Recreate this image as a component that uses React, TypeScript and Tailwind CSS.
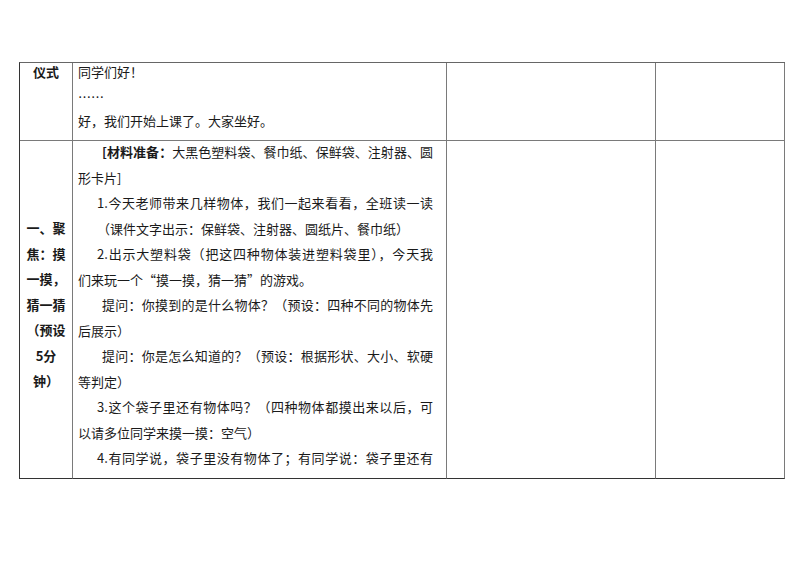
type Line = { text: string; bold?: string; indent?: "num" | "text"; full?: boolean };

const lines: Line[] = [
  { bold: "[材料准备：", text: "大黑色塑料袋、餐巾纸、保鲜袋、注射器、圆", indent: "text", full: true },
  { text: "形卡片]" },
  { text: "1.今天老师带来几样物体，我们一起来看看，全班读一读", indent: "num", full: true },
  { text: "（课件文字出示：保鲜袋、注射器、圆纸片、餐巾纸）", indent: "num" },
  { text: "2.出示大塑料袋（把这四种物体装进塑料袋里），今天我", indent: "num", full: true },
  { text: "们来玩一个“摸一摸，猜一猜”的游戏。" },
  { text: "提问：你摸到的是什么物体？（预设：四种不同的物体先", indent: "text", full: true },
  { text: "后展示）" },
  { text: "提问：你是怎么知道的？（预设：根据形状、大小、软硬", indent: "text", full: true },
  { text: "等判定）" },
  { text: "3.这个袋子里还有物体吗？（四种物体都摸出来以后，可", indent: "num", full: true },
  { text: "以请多位同学来摸一摸：空气）" },
  { text: "4.有同学说，袋子里没有物体了；有同学说：袋子里还有", indent: "num", full: true },
];

const stage = ["一、聚", "焦：摸", "一摸，", "猜一猜", "（预设", "5分", "钟）"];

export default function App() {
  return (
    <div className="w-[794px] h-[561px] bg-white overflow-hidden font-['Noto_Sans_CJK_SC',sans-serif] text-[13px] text-[#1a1a1a]">
      <div className="ml-[19px] mt-[62px] w-[766px] border-l border-t border-l-[#333] border-t-[#666] grid grid-cols-[53px_374px_209px_129px]">
        {/* row 1 */}
        <div className="h-[78px] border-r border-b border-[#7a7a7a] text-center font-bold leading-[24.5px]">
          <div className="-mt-[3px]">仪式</div>
        </div>
        <div className="h-[78px] border-r border-b border-[#7a7a7a] pl-[5px] leading-[24.5px]">
          <div className="-mt-[3px]">
            <div>同学们好！</div>
            <div>……</div>
            <div>好，我们开始上课了。大家坐好。</div>
          </div>
        </div>
        <div className="h-[78px] border-r border-b border-[#7a7a7a]" />
        <div className="h-[78px] border-r border-b border-[#7a7a7a]" />

        {/* row 2 */}
        <div className="h-[338px] border-r border-[#7a7a7a] border-b border-b-[#333] pt-[74px] text-center font-bold leading-[25.5px]">
          {stage.map((s) => (
            <div key={s}>{s}</div>
          ))}
        </div>
        <div className="h-[338px] border-r border-[#7a7a7a] border-b border-b-[#333] pl-[5px] pr-[13px] leading-[25.5px]">
          <div className="-mt-[2px]">
            {lines.map((l, i) => (
              <div
                key={i}
                className={
                  (l.indent === "num" ? "pl-[19px] " : l.indent === "text" ? "pl-[24px] " : "") +
                  (l.full ? "text-justify [text-align-last:justify] whitespace-nowrap" : "whitespace-nowrap")
                }
              >
                {l.bold && <span className="font-bold">{l.bold}</span>}
                {l.text}
              </div>
            ))}
          </div>
        </div>
        <div className="h-[338px] border-r border-[#7a7a7a] border-b border-b-[#333]" />
        <div className="h-[338px] border-r border-[#7a7a7a] border-b border-b-[#333]" />
      </div>
    </div>
  );
}
